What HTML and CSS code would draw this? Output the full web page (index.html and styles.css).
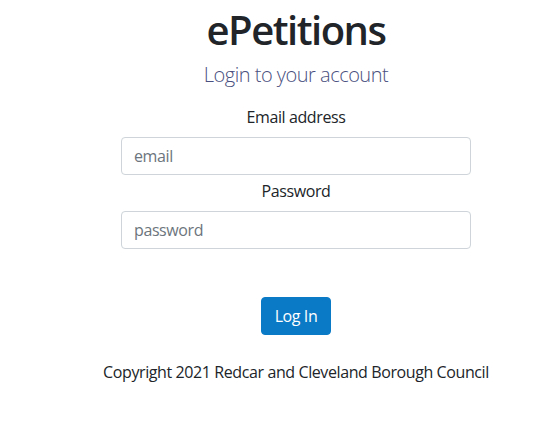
FILE: index.html
```html
<!DOCTYPE html>
<html lang="en">
<head>
<meta charset="utf-8">
<title>ePetitions - Login</title>
<link rel="stylesheet" href="styles.css">
</head>
<body>
<main class="login">
  <h1 class="title">ePetitions</h1>
  <p class="subtitle">Login to your account</p>
  <form class="form">
    <label class="label" for="email">Email address</label>
    <input class="input" id="email" type="email" placeholder="email">
    <label class="label label-pw" for="password">Password</label>
    <input class="input" id="password" type="password" placeholder="password">
    <button class="btn" type="button">Log In</button>
  </form>
  <p class="copyright">Copyright 2021 Redcar and Cleveland Borough Council</p>
</main>
</body>
</html>
```
FILE: styles.css
```css
html, body {
  margin: 0;
  padding: 0;
  background: #fff;
}
body {
  font-family: "Open Sans", "Noto Sans", sans-serif;
  font-size: 16px;
  letter-spacing: -0.4px;
  color: #212529;
}
.login {
  padding-left: 32px;
  text-align: center;
}
.title {
  margin: 0;
  padding-top: 6px;
  font-size: 40px;
  line-height: 48px;
  font-weight: 600;
  letter-spacing: -1.5px;
  color: #212529;
}
.subtitle {
  margin: 6px 0 0;
  font-size: 20px;
  line-height: 30px;
  font-weight: 300;
  letter-spacing: -0.5px;
  color: #4a5080;
}
.form {
  width: 350px;
  margin: 15px auto 0;
  display: flex;
  flex-direction: column;
  align-items: center;
}
.label {
  display: block;
  line-height: 24px;
  margin-bottom: 8px;
}
.label-pw {
  margin-top: 4px;
}
.input {
  box-sizing: border-box;
  width: 350px;
  height: 38px;
  padding: 6px 12px;
  border: 1px solid #ced4da;
  border-radius: 4px;
  font-family: inherit;
  font-size: 16px;
  letter-spacing: -0.4px;
  color: #495057;
  background: #fff;
}
.input::placeholder {
  color: #6c757d;
}
.btn {
  margin-top: 48px;
  box-sizing: border-box;
  width: 70px;
  height: 38px;
  padding: 0;
  border: 1px solid #0a7ac6;
  border-radius: 4px;
  background: #0a7ac6;
  color: #fff;
  font-family: inherit;
  font-size: 16px;
  letter-spacing: -0.4px;
}
.copyright {
  margin: 25px 0 0;
  line-height: 24px;
}
```
